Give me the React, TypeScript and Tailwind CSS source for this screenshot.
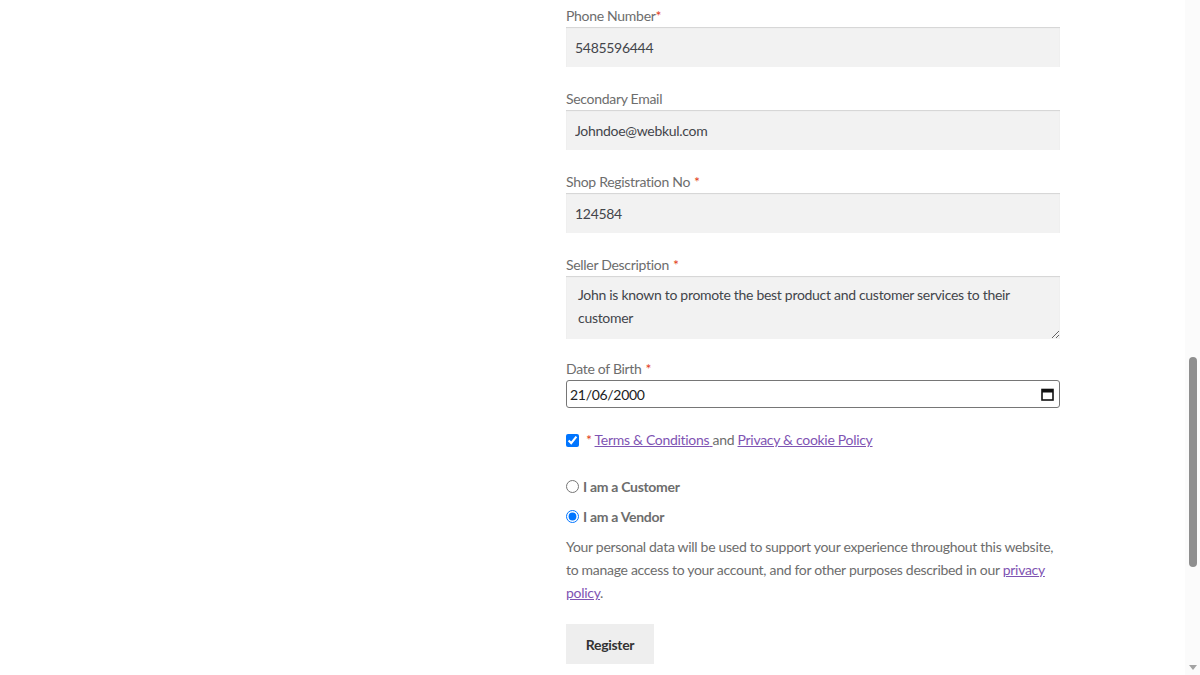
import { useState } from "react";

const FONT = { fontFamily: "Lato, 'Noto Sans', sans-serif", letterSpacing: "-0.3px" };

function Label({ text, tight }: { text: string; tight?: boolean }) {
  return (
    <label className="block h-[23px] text-[14px] leading-[23px] text-[#6d6d6d]">
      {text}
      <span className={`text-[#e2401c] ${tight ? "" : "ml-1"}`}>*</span>
    </label>
  );
}

function Plain({ text }: { text: string }) {
  return <label className="block h-[23px] text-[14px] leading-[23px] text-[#6d6d6d]">{text}</label>;
}

function Field({ value }: { value: string }) {
  return (
    <input
      readOnly
      value={value}
      className="block h-10 w-full bg-[#f2f2f2] px-[9px] text-[14px] text-[#43454b] shadow-[inset_0_1px_1px_rgba(0,0,0,0.125)] outline-none"
    />
  );
}

export default function App() {
  const [role, setRole] = useState("vendor");
  const [agree, setAgree] = useState(true);

  return (
    <div className="flex h-[675px] w-[1200px] overflow-hidden bg-white" style={FONT}>
      <main className="flex-1 pl-[566px] pt-[4px]">
        <form className="w-[494px]" onSubmit={(e) => e.preventDefault()}>
          <div className="mb-5">
            <Label text="Phone Number" tight />
            <Field value="5485596444" />
          </div>
          <div className="mb-5">
            <Plain text="Secondary Email" />
            <Field value="Johndoe@webkul.com" />
          </div>
          <div className="mb-5">
            <Label text="Shop Registration No" />
            <Field value="124584" />
          </div>
          <div className="mb-[18px]">
            <Label text="Seller Description" />
            <textarea
              readOnly
              value="John is known to promote the best product and customer services to their customer"
              className="block h-[63px] w-full resize-y bg-[#f2f2f2] px-3 py-[7px] text-[14px] leading-[23px] text-[#43454b] shadow-[inset_0_1px_1px_rgba(0,0,0,0.125)] outline-none"
            />
          </div>
          <div className="mb-[22px]">
            <Label text="Date of Birth" />
            <div className="flex h-7 items-center justify-between rounded-[3px] border border-[#767676] bg-white pl-[3px] pr-[5px] text-[14px] text-[#222]">
              <span>21/06/2000</span>
              <svg width="13" height="13" viewBox="0 0 13 13">
                <rect x="1" y="1.5" width="11" height="10.5" fill="none" stroke="#111" strokeWidth="1.6" />
                <rect x="1" y="1.5" width="11" height="3" fill="#111" />
              </svg>
            </div>
          </div>
          <div className="h-5 text-[14px] leading-5">
            <input
              type="checkbox"
              checked={agree}
              onChange={() => setAgree(!agree)}
              className="m-0 inline-block h-[13px] w-[13px] align-[-2px] accent-[#0075ff]"
            />
            <span className="ml-[7px] text-[#e2401c]">*</span>{" "}
            <a href="#" className="text-[#7f54b3] underline">
              Terms &amp; Conditions{"\u00a0"}
            </a>
            <span className="text-[#6d6d6d]">and </span>
            <a href="#" className="text-[#7f54b3] underline">
              Privacy &amp; cookie Policy
            </a>
          </div>
          <div className="mt-[26px] flex flex-col gap-[10px] text-[14px] font-bold text-[#6d6d6d]">
            <label className="flex h-5 items-center gap-[4px]">
              <input
                type="radio"
                name="role"
                checked={role === "customer"}
                onChange={() => setRole("customer")}
                className="m-0 h-[13px] w-[13px] accent-[#0075ff]"
              />
              I am a Customer
            </label>
            <label className="flex h-5 items-center gap-[4px]">
              <input
                type="radio"
                name="role"
                checked={role === "vendor"}
                onChange={() => setRole("vendor")}
                className="m-0 h-[13px] w-[13px] accent-[#0075ff]"
              />
              I am a Vendor
            </label>
          </div>
          <p className="mt-[9px] text-[14px] leading-[23px] text-[#6d6d6d]">
            Your personal data will be used to support your experience throughout this website, to manage access to
            your account, and for other purposes described in our{" "}
            <a href="#" className="text-[#7f54b3] underline">
              privacy policy
            </a>
            .
          </p>
          <button
            type="submit"
            className="mt-5 h-10 w-[88px] bg-[#eeeeee] text-[14px] font-bold text-[#333333]"
          >
            Register
          </button>
        </form>
      </main>
      <aside className="flex w-[15px] flex-col items-center bg-[#fbfbfb]">
        <div className="h-[357px]" />
        <div className="h-[210px] w-[8px] rounded-full bg-[#8f8f8f]" />
        <div className="flex-1" />
        <svg width="8" height="5" viewBox="0 0 8 5" className="mb-[5px]">
          <path d="M0 0h8L4 5z" fill="#a3a3a3" />
        </svg>
      </aside>
    </div>
  );
}
